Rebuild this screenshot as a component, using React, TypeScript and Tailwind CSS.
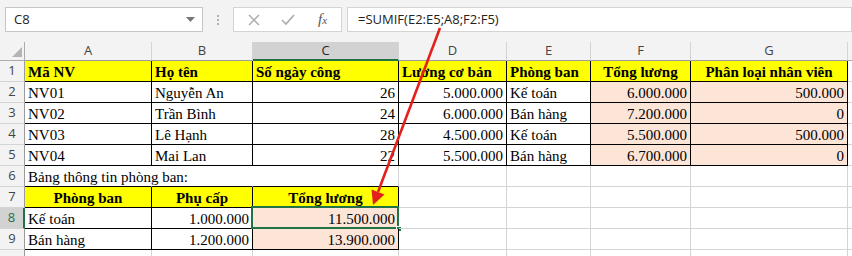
import React from 'react';

type Cell = {
  t?: string;
  al?: 'l' | 'r' | 'c';
  b?: boolean;
  fill?: 'y' | 'p';
  kr?: boolean; // black right border
  kb?: boolean; // black bottom border
  hideR?: boolean; // text overflow hides the gridline
};

const WIDTHS = ['w-[127px]', 'w-[101px]', 'w-[146px]', 'w-[108px]', 'w-[84px]', 'w-[100px]', 'w-[157px]'];
const LETTERS = ['A', 'B', 'C', 'D', 'E', 'F', 'G'];

const box = (c: Cell): Cell => ({ ...c, kr: true, kb: true });

const ROWS: Cell[][] = [
  [
    box({ t: 'Mã NV', b: true, fill: 'y' }),
    box({ t: 'Họ tên', b: true, fill: 'y' }),
    box({ t: 'Số ngày công', b: true, fill: 'y' }),
    box({ t: 'Lương cơ bản', b: true, fill: 'y' }),
    box({ t: 'Phòng ban', b: true, fill: 'y' }),
    box({ t: 'Tổng lương', b: true, fill: 'y', al: 'c' }),
    box({ t: 'Phân loại nhân viên', b: true, fill: 'y', al: 'c' }),
  ],
  ...[
    ['NV01', 'Nguyễn An', '26', '5.000.000', 'Kế toán', '6.000.000', '500.000'],
    ['NV02', 'Trần Bình', '24', '6.000.000', 'Bán hàng', '7.200.000', '0'],
    ['NV03', 'Lê Hạnh', '28', '4.500.000', 'Kế toán', '5.500.000', '500.000'],
    ['NV04', 'Mai Lan', '22', '5.500.000', 'Bán hàng', '6.700.000', '0'],
  ].map(r => [
    box({ t: r[0] }),
    box({ t: r[1] }),
    box({ t: r[2], al: 'r' }),
    box({ t: r[3], al: 'r' }),
    box({ t: r[4] }),
    box({ t: r[5], al: 'r', fill: 'p' }),
    box({ t: r[6], al: 'r', fill: 'p' }),
  ]),
  [
    { t: 'Bảng thông tin phòng ban:', kb: true, hideR: true },
    { kb: true, hideR: true },
    { kb: true },
    {}, {}, {}, {},
  ],
  [
    box({ t: 'Phòng ban', b: true, fill: 'y', al: 'c' }),
    box({ t: 'Phụ cấp', b: true, fill: 'y', al: 'c' }),
    box({ t: 'Tổng lương', b: true, fill: 'y', al: 'c' }),
    {}, {}, {}, {},
  ],
  [
    box({ t: 'Kế toán' }),
    box({ t: '1.000.000', al: 'r' }),
    box({ t: '11.500.000', al: 'r', fill: 'p' }),
    {}, {}, {}, {},
  ],
  [
    box({ t: 'Bán hàng' }),
    box({ t: '1.200.000', al: 'r' }),
    box({ t: '13.900.000', al: 'r', fill: 'p' }),
    {}, {}, {}, {},
  ],
  [{}, {}, {}, {}, {}, {}, {}],
];

function GridCell({ c, w, selected }: { c: Cell; w: string; selected?: boolean }) {
  const justify = c.al === 'r' ? 'justify-end' : c.al === 'c' ? 'justify-center' : 'justify-start';
  const bg = c.fill === 'y' ? 'bg-[#ffff00]' : c.fill === 'p' ? 'bg-[#fce4d6]' : '';
  const right = c.kr ? 'border-r-black' : c.hideR ? 'border-r-transparent' : 'border-r-[#d4d4d4]';
  const bottom = c.kb ? 'border-b-black' : 'border-b-[#d4d4d4]';
  return (
    <div
      className={`${w} shrink-0 h-full border-r border-b ${right} ${bottom} ${bg} ${justify} relative flex items-end px-[3px] whitespace-nowrap text-[15px] leading-[18px] text-black ${c.b ? 'font-bold' : ''}`}
    >
      <span>{c.t}</span>
      {selected && (
        <>
          <div className="absolute -left-[2px] -top-[2px] -right-[1px] -bottom-[1px] border-2 border-[#217346]" />
          <div className="absolute -right-[4px] -bottom-[4px] w-[6px] h-[6px] bg-[#217346] border border-white" />
        </>
      )}
    </div>
  );
}

export default function App() {
  return (
    <div className="relative w-[852px] h-[256px] overflow-hidden bg-white font-['Liberation_Serif',serif]">
      {/* Formula bar */}
      <div className="h-[42px] bg-[#f3f3f3] flex items-start pt-[7px] font-['Open_Sans',sans-serif]">
        <div className="ml-[5px] w-[198px] h-[25px] bg-white border border-[#c6c6c6] flex items-center pl-[8px] pr-[7px] text-[13px] text-[#222]">
          <span className="flex-1">C8</span>
          <svg width="9" height="5" viewBox="0 0 9 5">
            <path d="M0 0 L9 0 L4.5 5 Z" fill="#777" />
          </svg>
        </div>
        <div className="w-[30px] h-[25px] flex flex-col items-center justify-center gap-[2px]">
          <div className="w-[2px] h-[2px] bg-[#b0b0b0]" />
          <div className="w-[2px] h-[2px] bg-[#b0b0b0]" />
          <div className="w-[2px] h-[2px] bg-[#b0b0b0]" />
        </div>
        <div className="w-[109px] h-[25px] bg-white border border-[#d4d4d4] flex items-center">
          <svg width="12" height="12" viewBox="0 0 12 12" className="ml-[14px]">
            <path d="M1 1 L11 11 M11 1 L1 11" stroke="#aaa" strokeWidth="1.4" />
          </svg>
          <svg width="14" height="12" viewBox="0 0 14 12" className="ml-[21px]">
            <path d="M1 6 L5 10 L13 1" stroke="#aaa" strokeWidth="1.6" fill="none" />
          </svg>
          <span className="ml-[23px] font-['Liberation_Serif',serif] italic text-[15px] text-[#555] leading-none">
            f<span className="text-[11px]">x</span>
          </span>
        </div>
        <div className="ml-[5px] flex-1 h-[25px] bg-white border border-[#d4d4d4] flex items-center pl-[10px] text-[13px] text-[#222]">
          =SUMIF(E2:E5;A8;F2:F5)
        </div>
      </div>

      {/* Column headers */}
      <div className="h-[19px] flex bg-[#f3f3f3] font-['Open_Sans',sans-serif] text-[13px] text-[#444]">
        <div className="w-[25px] shrink-0 h-full border-r border-b border-[#ababab] relative">
          <svg width="25" height="19" viewBox="0 0 25 19" className="absolute left-0 top-0">
            <path d="M22 5 L22 15 L12 15 Z" fill="#b4b4b4" />
          </svg>
        </div>
        {LETTERS.map((l, i) => (
          <div
            key={l}
            className={`${WIDTHS[i]} shrink-0 h-full border-r border-r-[#d4d4d4] flex items-center justify-center ${
              i === 2 ? 'bg-[#d2d2d2] border-b-2 border-b-[#217346] text-[#262626]' : 'border-b border-b-[#9b9b9b]'
            }`}
          >
            {l}
          </div>
        ))}
        <div className="flex-1 h-full border-b border-b-[#ababab]" />
      </div>

      {/* Rows */}
      {ROWS.map((row, ri) => {
        const n = ri + 1;
        const sel = n === 8;
        return (
          <div key={n} className="h-[21px] flex">
            <div
              className={`w-[25px] shrink-0 h-full border-b border-b-[#d4d4d4] flex items-center justify-center font-['Open_Sans',sans-serif] text-[13px] ${
                sel
                  ? 'bg-[#d2d2d2] border-r-2 border-r-[#217346] text-[#217346]'
                  : 'bg-[#f3f3f3] border-r border-r-[#9b9b9b] text-[#444]'
              }`}
            >
              {n < 10 ? n : ''}
            </div>
            {row.map((c, ci) => (
              <GridCell key={ci} c={c} w={WIDTHS[ci]} selected={sel && ci === 2} />
            ))}
            <div className="flex-1 h-full border-b border-b-[#d4d4d4]" />
          </div>
        );
      })}

      {/* Red annotation arrow */}
      <svg width="852" height="256" viewBox="0 0 852 256" className="absolute left-0 top-0 pointer-events-none">
        <line x1="440" y1="28" x2="378" y2="192" stroke="#e3211c" strokeWidth="2.6" />
        <path d="M373 205 L371.5 189.5 L384.5 194.5 Z" fill="#e3211c" />
      </svg>
    </div>
  );
}
